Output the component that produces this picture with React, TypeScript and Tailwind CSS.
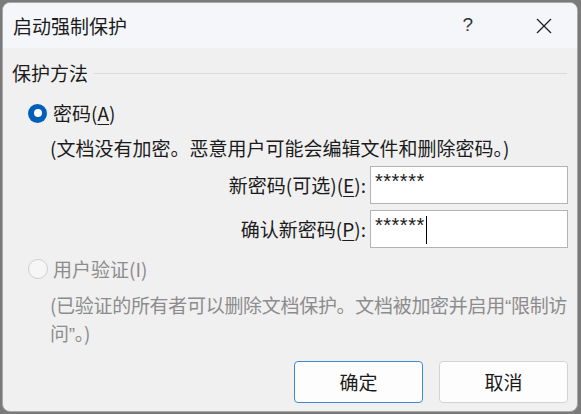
const FONT = "font-['Microsoft_YaHei_UI','Noto_Sans_CJK_SC',sans-serif]";

function Underlined({ children }: { children: string }) {
  return <span className="underline underline-offset-[3px] decoration-[1px]">{children}</span>;
}

// narrow curly quote, as in YaHei
function Quote({ children }: { children: string }) {
  return <span className="font-['Liberation_Sans',sans-serif]">{children}</span>;
}

function PasswordRow({
  label,
  keyChar,
  withCursor,
}: {
  label: string;
  keyChar: string;
  withCursor?: boolean;
}) {
  return (
    <div className="flex items-center justify-end pr-[9px]">
      <span className="mr-[4px] text-[19px] leading-[26px] text-[#1b1b1b]">
        {label}(<Underlined>{keyChar}</Underlined>):
      </span>
      <div className="flex h-[38px] w-[198px] items-start border border-[#b3b3b3] bg-white pl-[4px] pt-[3px]">
        <span className="font-['Liberation_Sans',sans-serif] text-[20px] leading-[22px] tracking-[0.5px] text-[#1b1b1b]">
          ******
        </span>
        {withCursor ? <span className="ml-[1px] mt-[2px] h-[28px] w-[1.5px] bg-black" /> : null}
      </div>
    </div>
  );
}

export default function App() {
  return (
    <div className={`h-[414px] w-[581px] bg-[#7a7a7a] pl-[2px] pt-[2px] ${FONT}`}>
      <div className="flex h-[410px] w-[576px] flex-col overflow-hidden rounded-[8px] border border-[#a8a8a8] bg-[#f0f0f0]">
        {/* title bar */}
        <div className="flex h-[45px] shrink-0 items-center bg-[#f4f6f9] pl-[10px]">
          <span className="text-[19px] leading-[26px] text-[#1b1b1b]">启动强制保护</span>
          <span className="ml-auto mr-[63px] font-['Liberation_Sans',sans-serif] text-[19px] font-light text-[#333]">
            ?
          </span>
          <svg width="16" height="16" viewBox="0 0 16 16" className="mr-[25px]">
            <path d="M1 1 L15 15 M15 1 L1 15" stroke="#1f1f1f" strokeWidth="1.3" fill="none" />
          </svg>
        </div>

        {/* body */}
        <div className="flex flex-1 flex-col">
          <div className="mt-[12px] flex h-[26px] items-center pl-[9px] pr-[10px]">
            <span className="text-[19px] leading-[26px] text-[#1b1b1b]">保护方法</span>
            <div className="ml-[6px] h-px flex-1 bg-[#dadada]" />
          </div>

          <div className="mt-[14px] flex h-[26px] items-center pl-[25px]">
            <span className="flex h-[19px] w-[19px] items-center justify-center rounded-full bg-[#005fb8]">
              <span className="h-[8px] w-[8px] rounded-full bg-white" />
            </span>
            <span className="ml-[6px] text-[19px] leading-[26px] text-[#1b1b1b]">
              密码(<Underlined>A</Underlined>)
            </span>
          </div>

          <p className="mt-[9px] whitespace-nowrap pl-[47px] text-[19px] leading-[26px] text-[#1b1b1b]">
            (文档没有加密。恶意用户可能会编辑文件和删除密码。)
          </p>

          <div className="mt-[5px]">
            <PasswordRow label="新密码(可选)" keyChar="E" />
          </div>
          <div className="mt-[6px]">
            <PasswordRow label="确认新密码" keyChar="P" withCursor />
          </div>

          <div className="mt-[8px] flex h-[26px] items-center pl-[25px]">
            <span className="h-[20px] w-[20px] rounded-full border border-[#cfcfcf] bg-[#f6f6f6]" />
            <span className="ml-[5px] text-[19px] leading-[26px] text-[#8c8c8c]">用户验证(I)</span>
          </div>

          <div className="mt-[10px] pl-[47px] text-[19px] leading-[26px] tracking-[-0.3px] text-[#8c8c8c]">
            <div className="whitespace-nowrap">
              (已验证的所有者可以删除文档保护。文档被加密并启用<Quote>“</Quote>限制访
            </div>
            <div className="whitespace-nowrap">
              问<Quote>”</Quote>。)
            </div>
          </div>

          <div className="mt-[13px] flex justify-end gap-[16px] pr-[9px]">
            <button
              type="button"
              className="flex h-[42px] w-[129px] items-center justify-center rounded-[4px] border-[1.5px] border-[#3d8ad0] bg-[#fdfdfd] text-[19px] text-[#1b1b1b]"
            >
              确定
            </button>
            <button
              type="button"
              className="flex h-[42px] w-[129px] items-center justify-center rounded-[4px] border border-[#d3d3d3] bg-[#fdfdfd] text-[19px] text-[#1b1b1b]"
            >
              取消
            </button>
          </div>
        </div>
      </div>
    </div>
  );
}
